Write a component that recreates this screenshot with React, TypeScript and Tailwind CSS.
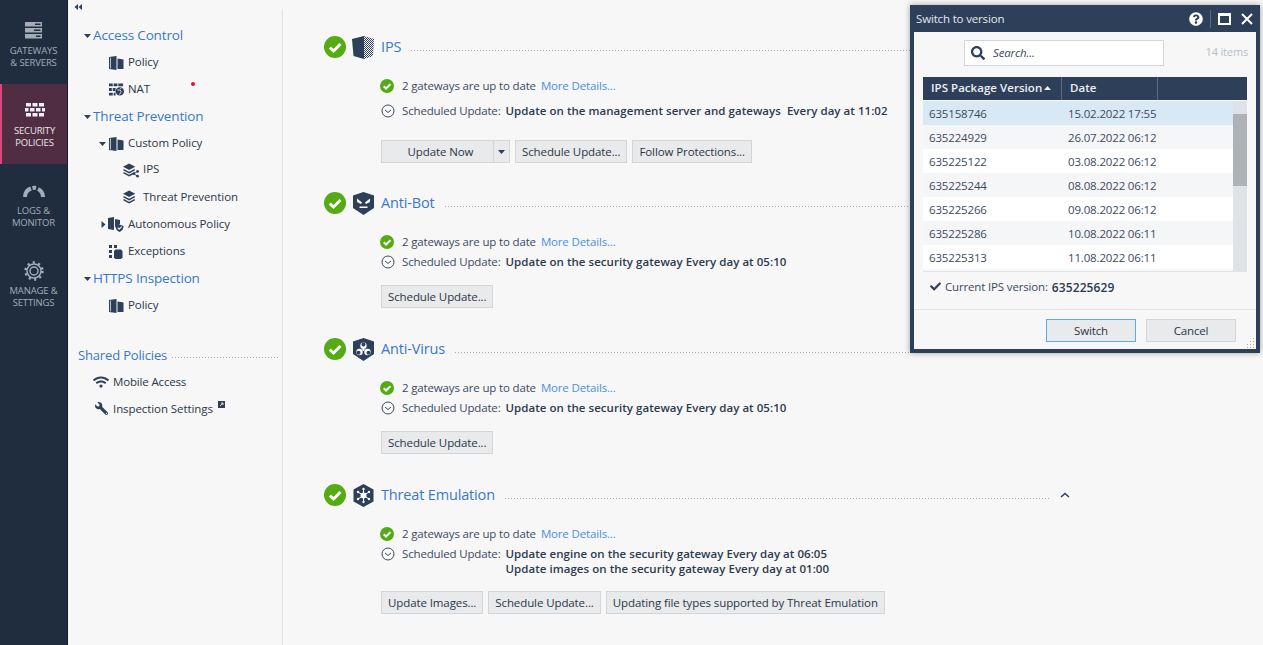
import { FaCheck, FaQuestionCircle, FaSearch, FaWifi, FaWrench } from 'react-icons/fa';

const NAVY = '#2d3f59';

function Caret({ dir = 'down' }: { dir?: 'down' | 'right' | 'up' }): React.ReactNode {
  if (dir === 'right') {
    return (
      <svg width="5" height="7" viewBox="0 0 5 7" className="shrink-0">
        <path d="M0.5 0 L4.5 3.5 L0.5 7 Z" fill="#2d3f59" />
      </svg>
    );
  }
  return (
    <svg width="7" height="4" viewBox="0 0 7 4" className="shrink-0">
      <path d="M0 0 L7 0 L3.5 4 Z" fill="#2d3f59" />
    </svg>
  );
}

function DottedRule({ className }: { className: string }): React.ReactNode {
  return (
    <span
      className={`h-px flex-1 bg-[linear-gradient(to_right,#a9b0ba_1px,transparent_1px)] bg-[length:3px_1px] ${className}`}
    />
  );
}

function BookIcon(): React.ReactNode {
  return (
    <svg width="15" height="14" viewBox="0 0 15 14" className="shrink-0">
      <path d="M0 1 L7.500 0 V14 L0 13 Z M8.500 2.500 L14.500 3.500 V13 H8.500 Z" fill="#2d3f59" />
      <path d="M1.500 1.500 V12.500" stroke="#f7f7f7" strokeWidth="0.7" />
    </svg>
  );
}

function NatIcon(): React.ReactNode {
  return (
    <svg width="15" height="13" viewBox="0 0 16 13" className="shrink-0">
      <path d="M0 0h4v3H0zM5 0h4v3H5zM10 0h5v3h-5zM0 5h3v3H0zM4 5h3v3H4zM0 10h4v3H0zM5 10h2v3H5z" fill="#2d3f59" />
      <circle cx="11.500" cy="8.500" r="4.500" fill="#2d3f59" />
      <path d="M9 7h3l1 2-2 3M12 5l1 1" stroke="#f7f7f7" strokeWidth="0.9" fill="none" />
    </svg>
  );
}

function LayersIcon({ share }: { share?: boolean }): React.ReactNode {
  return (
    <svg width="16" height="15" viewBox="0 0 17 15" className="shrink-0">
      <path d="M6.500 0 L13 3.500 L6.500 7 L0 3.500 Z" fill="#2d3f59" />
      <path d="M0.500 6.500 L6.500 9.800 L12.500 6.500" stroke="#2d3f59" strokeWidth="1.600" fill="none" />
      <path d="M0.500 9.700 L6.500 13 L12.500 9.700" stroke="#2d3f59" strokeWidth="1.600" fill="none" />
      {share && (
        <g fill="#2d3f59">
          <circle cx="11.500" cy="11" r="1.400" />
          <circle cx="15.500" cy="8.500" r="1.400" />
          <circle cx="15.500" cy="13.500" r="1.400" />
          <path d="M11.500 11 L15.500 8.500 M11.500 11 L15.500 13.500" stroke="#2d3f59" strokeWidth="1" />
        </g>
      )}
    </svg>
  );
}

function AutoIcon(): React.ReactNode {
  return (
    <svg width="16" height="15" viewBox="0 0 16 15" className="shrink-0">
      <path d="M0 1 L6 0 V13 L0 12 Z M7 2 L12 3 V7 L7 10 Z" fill="#2d3f59" />
      <path d="M11.500 7.500 L15.500 9 C15.500 12 14 14 11.500 15 C9 14 7.500 12 7.500 9 Z" fill="#2d3f59" />
      <path d="M9.700 10.700 L11.200 12.200 L13.600 9.600" stroke="#f7f7f7" strokeWidth="1.100" fill="none" />
    </svg>
  );
}

function ExceptionsIcon(): React.ReactNode {
  return (
    <svg width="15" height="14" viewBox="0 0 15 14" className="shrink-0">
      <path d="M0 0h3v3H0zM0 5h3v3H0zM0 10h3v3H0zM5 0h3v3H5z" fill="#2d3f59" />
      <path d="M6.500 4.500h5.500l1.500 1.500v6.500l-1.500 1.500H6.500L5 12.500V6Z" fill="#2d3f59" />
    </svg>
  );
}

function StatusCheck({ size }: { size: number }): React.ReactNode {
  return (
    <svg width={size} height={size} viewBox="0 0 22 22" className="shrink-0">
      <circle cx="11" cy="11" r="11" fill="#55ab14" />
      <path d="M5.800 11.500 L9.500 15 L16.500 8" stroke="#fff" strokeWidth="3" fill="none" />
    </svg>
  );
}

function ClockCircle(): React.ReactNode {
  return (
    <svg width="14" height="14" viewBox="0 0 14 14" className="shrink-0">
      <circle cx="7" cy="7" r="6" stroke="#3b4a5f" strokeWidth="1" fill="none" />
      <path d="M4 6 L7 8.500 L10 6" stroke="#3b4a5f" strokeWidth="1" fill="none" />
    </svg>
  );
}

function IpsShield(): React.ReactNode {
  return (
    <svg width="23" height="23" viewBox="0 0 23 23" className="shrink-0">
      <defs>
        <pattern id="dots" width="2" height="2" patternUnits="userSpaceOnUse">
          <rect width="1" height="1" fill="#2d3f59" />
          <rect x="1" y="1" width="1" height="1" fill="#2d3f59" />
        </pattern>
      </defs>
      <path d="M0 3 L12 0 V23 L1.500 20 Z" fill="#2d3f59" />
      <path d="M12 0 L22 3 L21 20 L12 23 Z" fill="url(#dots)" />
    </svg>
  );
}

function BadgeShape({ children }: { children: React.ReactNode }): React.ReactNode {
  return (
    <svg width="23" height="23" viewBox="0 0 23 23" className="shrink-0">
      <path d="M11.500 0 L22 3.500 V16 L11.500 23 L1 16 V3.500 Z" fill="#2d3f59" />
      {children}
    </svg>
  );
}

function BotIcon(): React.ReactNode {
  return (
    <BadgeShape>
      <path d="M5 6.500 L10 10.500 L9 12 L5 10 Z M18 6.500 L13 10.500 L14 12 L18 10 Z" fill="#fff" />
      <rect x="7.500" y="14.500" width="8" height="1.500" fill="#fff" />
    </BadgeShape>
  );
}

function VirusIcon(): React.ReactNode {
  return (
    <BadgeShape>
      <g fill="#fff">
        <circle cx="11.500" cy="7.800" r="3.200" />
        <circle cx="7.500" cy="14" r="3.200" />
        <circle cx="15.500" cy="14" r="3.200" />
      </g>
      <g fill="#2d3f59">
        <circle cx="11.500" cy="6.600" r="2" />
        <circle cx="6.500" cy="14.700" r="2" />
        <circle cx="16.500" cy="14.700" r="2" />
      </g>
      <circle cx="11.500" cy="11.800" r="1.200" fill="#fff" />
    </BadgeShape>
  );
}

function EmulationIcon(): React.ReactNode {
  return (
    <svg width="23" height="23" viewBox="0 0 23 23" className="shrink-0">
      <path d="M11.500 0 L21.500 5.500 V17.500 L11.500 23 L1.500 17.500 V5.500 Z" fill="#2d3f59" />
      <circle cx="11.500" cy="11.500" r="3" fill="#fff" />
      <g stroke="#fff" strokeWidth="1">
        <path d="M11.500 11.500 L11.500 5 M11.500 11.500 L17 8 M11.500 11.500 L17 15 M11.500 11.500 L11.500 18 M11.500 11.500 L6 15 M11.500 11.500 L6 8" />
      </g>
      <g fill="#fff">
        <circle cx="11.500" cy="5" r="1.200" />
        <circle cx="17" cy="8" r="1.200" />
        <circle cx="17" cy="15" r="1.200" />
        <circle cx="11.500" cy="18" r="1.200" />
        <circle cx="6" cy="15" r="1.200" />
        <circle cx="6" cy="8" r="1.200" />
      </g>
    </svg>
  );
}

function ServerIcon(): React.ReactNode {
  return (
    <svg width="17" height="17" viewBox="0 0 17 17">
      <g fill="#a3acb7">
        <path d="M0 0h17v4.500H0zM0 6h17v4.500H0zM0 12h17v4.500H0z" />
      </g>
      <g fill="#1f2d3f">
        <path d="M10 1.500h5.500v1.500H10zM9 7.500h6.500V9H9zM11 13.500h4.500V15H11z" />
      </g>
    </svg>
  );
}

function WallIcon(): React.ReactNode {
  return (
    <svg width="20" height="14" viewBox="0 0 20 14">
      <g fill="#eef0f3">
        <path d="M1 0h5v3.500H1zM7.500 0h5v3.500h-5zM14 0h5v3.500h-5z" />
        <path d="M0 5h3.500v3.500H0zM5 5h4.500v3.500H5zM11 5h4.500v3.500H11zM17 5h3v3.500h-3z" />
        <path d="M1 10h5v3.500H1zM7.500 10h5v3.500h-5zM14 10h5v3.500h-5z" />
      </g>
    </svg>
  );
}

function GaugeIcon(): React.ReactNode {
  return (
    <svg width="22" height="13" viewBox="0 0 22 13">
      <path d="M2 12 A 9 9 0 0 1 8 3.500" stroke="#a3acb7" strokeWidth="4" fill="none" />
      <path d="M9.500 3 A 9 9 0 0 1 13 3" stroke="#a3acb7" strokeWidth="4" fill="none" />
      <path d="M15 4 A 9 9 0 0 1 20 12" stroke="#a3acb7" strokeWidth="4" fill="none" />
    </svg>
  );
}

function GearIcon(): React.ReactNode {
  return (
    <svg width="20" height="20" viewBox="0 0 20 20">
      <circle cx="10" cy="10" r="7" stroke="#a3acb7" strokeWidth="1.500" fill="none" />
      <circle cx="10" cy="10" r="4" stroke="#a3acb7" strokeWidth="1.500" fill="none" />
      <g stroke="#a3acb7" strokeWidth="2.500" strokeDasharray="2.200 3.300">
        <circle cx="10" cy="10" r="8.500" fill="none" />
      </g>
    </svg>
  );
}

function RailItem({
  icon,
  lines,
  active,
  className,
  iconTop,
  labelTop,
}: {
  icon: React.ReactNode;
  lines: string[];
  active?: boolean;
  className: string;
  iconTop: string;
  labelTop: string;
}): React.ReactNode {
  return (
    <div
      className={`flex flex-col items-center justify-start ${className} ${
        active ? 'border-l-2 border-[#d8487c] bg-[#512d42] text-[#e6e9ed]' : 'text-[#a3acb7]'
      }`}
    >
      <div className={`flex h-[20px] items-center justify-center ${iconTop}`}>{icon}</div>
      <div className={`text-center text-[9.5px] leading-[12px] ${labelTop}`}>
        {lines.map((line) => (
          <div key={line}>{line}</div>
        ))}
      </div>
    </div>
  );
}

function TreeHeader({ label }: { label: string }): React.ReactNode {
  return (
    <div className="flex h-[27px] items-center pl-[16px]">
      <span className="flex w-[9px]">
        <Caret />
      </span>
      <span className="text-[13.5px] text-[#3a78c9]">{label}</span>
    </div>
  );
}

function TreeItem({
  icon,
  label,
  indent,
  caret,
  labelClass,
  children,
}: {
  icon: React.ReactNode;
  label: string;
  indent: string;
  caret?: React.ReactNode;
  labelClass?: string;
  children?: React.ReactNode;
}): React.ReactNode {
  return (
    <div className={`relative flex h-[27px] items-center ${indent}`}>
      {caret}
      {icon}
      <span className={`ml-[4px] text-[11.5px] tracking-[-0.08px] text-[#2b3646] ${labelClass ?? 'mb-[2px]'}`}>{label}</span>
      {children}
    </div>
  );
}

function Button({ label, width }: { label: string; width?: string }): React.ReactNode {
  return (
    <div
      className={`flex h-[23px] items-center justify-center border border-[#d3d6d9] bg-[#e9eaec] px-[6px] text-[11.5px] tracking-[-0.1px] text-[#2b3646] ${width ?? ''}`}
    >
      {label}
    </div>
  );
}

function Section({
  status,
  icon,
  title,
  top,
  gapTop,
  gapSchedule,
  gapButtons,
  schedule,
  chevron,
  children,
}: {
  status: React.ReactNode;
  icon: React.ReactNode;
  title: string;
  top: string;
  gapTop: string;
  gapSchedule: string;
  gapButtons: string;
  schedule: string[];
  chevron?: boolean;
  children: React.ReactNode;
}): React.ReactNode {
  return (
    <section className={top}>
      <div className="flex h-[24px] items-center">
        {status}
        <span className="ml-[6px] flex w-[24px]">{icon}</span>
        <span className="ml-[5px] text-[14.5px] text-[#3a78c9]">{title}</span>
        <DottedRule className="ml-[10px] mt-[6px]" />
        {chevron ? (
          <svg width="10" height="6" viewBox="0 0 10 6" className="ml-[10px]">
            <path d="M1 5 L5 1.500 L9 5" stroke="#2d3f59" strokeWidth="1.500" fill="none" />
          </svg>
        ) : (
          <span className="ml-[10px] w-[10px]" />
        )}
      </div>
      <div className={`pl-[57px] ${gapTop}`}>
        <div className="flex h-[16px] items-center text-[11.5px] text-[#3b4a5f]">
          <span className="flex w-[21px] -ml-px">
            <StatusCheck size={14} />
          </span>
          <span className="ml-px">2 gateways are up to date</span>
          <span className="ml-[5px] text-[#4a90e2]">More Details...</span>
        </div>
        <div className={`flex items-start text-[11.5px] text-[#3b4a5f] ${gapSchedule}`}>
          <span className="flex h-[16px] w-[21px] items-center">
            <ClockCircle />
          </span>
          <span className="h-[16px] leading-[16px]">Scheduled Update:</span>
          <div className="ml-[5px] font-semibold leading-[15px] tracking-[0.04px] whitespace-pre text-[#2d3a4d]">
            {schedule.map((line) => (
              <div key={line}>{line}</div>
            ))}
          </div>
        </div>
        <div className={`flex gap-[5px] ${gapButtons}`}>{children}</div>
      </div>
    </section>
  );
}

const ROWS = [
  ['635158746', '15.02.2022 17:55', 'bg-[#d9e8f5]'],
  ['635224929', '26.07.2022 06:12', 'bg-[#f5f6f8]'],
  ['635225122', '03.08.2022 06:12', 'bg-white'],
  ['635225244', '08.08.2022 06:12', 'bg-[#f5f6f8]'],
  ['635225266', '09.08.2022 06:12', 'bg-white'],
  ['635225286', '10.08.2022 06:11', 'bg-[#f5f6f8]'],
  ['635225313', '11.08.2022 06:11', 'bg-white'],
];

function VersionDialog(): React.ReactNode {
  return (
    <div className="absolute left-[910px] top-[5px] flex h-[348px] w-[350px] flex-col border-x-4 border-b-4 border-[#2d3f59] bg-[#f7f7f7] shadow-[0_0_6px_rgba(0,0,0,0.35)]">
      <div className="-mx-[4px] flex h-[27px] shrink-0 items-center bg-[#2d3f59] pl-[6px] text-[11.5px] text-[#e6e9ed]">
        <span>Switch to version</span>
        <FaQuestionCircle className="ml-auto text-[14px] text-white" />
        <span className="mx-[7px] h-[18px] w-px bg-[#5a6a80]" />
        <span className="h-[12px] w-[13px] border-2 border-t-[3px] border-white" />
        <svg width="12" height="12" viewBox="0 0 12 12" className="ml-[10px] mr-[7px]">
          <path d="M1 1 L11 11 M11 1 L1 11" stroke="#fff" strokeWidth="2" />
        </svg>
      </div>
      <div className="flex h-[42px] shrink-0 items-center">
        <div className="ml-[50px] flex h-[26px] w-[200px] items-center border border-[#d3d6d9] bg-white pl-[6px]">
          <FaSearch className="text-[14px] text-[#2d3f59]" />
          <span className="ml-[8px] text-[11.5px] italic text-[#3b4a5f]">Search...</span>
        </div>
        <span className="mb-[2px] ml-auto mr-[8px] text-[11px] text-[#b8bec6]">14 items</span>
      </div>
      <div className="mx-[9px] mt-[3px] flex h-[195px] shrink-0 flex-col">
        <div className="flex h-[23px] shrink-0 items-center bg-[#2d3f59] text-[11.5px] font-semibold tracking-[0.04px] text-[#eef0f3]">
          <div className="flex h-full w-[139px] items-center border-r border-[#5a6a80] pb-[2px] pl-[8px]">
            IPS Package Version
            <svg width="7" height="4" viewBox="0 0 7 4" className="ml-[2px]">
              <path d="M0 4 L7 4 L3.500 0 Z" fill="#eef0f3" />
            </svg>
          </div>
          <div className="flex h-full w-[96px] items-center border-r border-[#5a6a80] pb-[2px] pl-[8px]">Date</div>
        </div>
        <div className="flex min-h-0 flex-1 border-b border-[#dfe2e6] pt-px">
          <div className="flex-1 overflow-hidden">
            {ROWS.map(([version, date, bg]) => (
              <div key={version} className={`flex h-[24px] items-center pt-[2px] text-[11.5px] text-[#3b4a5f] ${bg}`}>
                <span className="w-[139px] pl-[6px]">{version}</span>
                <span className="pl-[6px]">{date}</span>
              </div>
            ))}
          </div>
          <div className="w-[14px] shrink-0 bg-[#dfe2e6] pt-[13px]">
            <div className="h-[72px] bg-[#adb2b6]" />
          </div>
        </div>
      </div>
      <div className="flex h-[38px] shrink-0 items-center border-b border-[#e1e3e5] pb-[8px] pl-[16px] text-[11.5px] text-[#3b4a5f]">
        <FaCheck className="text-[11px] text-[#2d3f59]" />
        <span className="ml-[4px]">Current IPS version:</span>
        <span className="ml-[4px] mt-[2px] text-[12px] font-semibold tracking-[0.1px] text-[#2d3a4d]">635225629</span>
      </div>
      <div className="relative flex flex-1 items-start justify-end gap-[10px] pr-[20px] pt-[9px]">
        <div className="flex h-[23px] w-[90px] items-center justify-center border border-[#5aaee8] bg-[#e9eaec] text-[11.5px] text-[#2b3646]">
          Switch
        </div>
        <div className="flex h-[23px] w-[90px] items-center justify-center border border-[#d3d6d9] bg-[#e9eaec] text-[11.5px] text-[#2b3646]">
          Cancel
        </div>
        <svg width="11" height="11" viewBox="0 0 11 11" className="absolute bottom-0 right-0">
          <g fill="#a9b0ba">
            <path d="M8 0h1v1H8zM8 3h1v1H8zM5 3h1v1H5zM8 6h1v1H8zM5 6h1v1H5zM2 6h1v1H2zM8 9h1v1H8zM5 9h1v1H5zM2 9h1v1H2z" />
          </g>
        </svg>
      </div>
    </div>
  );
}

export default function App(): React.ReactNode {
  return (
    <div
      className="relative flex h-[645px] w-[1263px] overflow-hidden bg-[#f7f7f7] tracking-[-0.16px]"
      style={{ fontFamily: '"Open Sans", "Noto Sans", sans-serif', color: NAVY }}
    >
      <nav className="w-[68px] shrink-0 border-r border-[#141d29] bg-[#1f2d3f]">
        <RailItem icon={<ServerIcon />} lines={['GATEWAYS', '& SERVERS']} className="h-[84px]" iconTop="mt-[20px]" labelTop="mt-[5px]" />
        <RailItem icon={<WallIcon />} lines={['SECURITY', 'POLICIES']} className="h-[80px]" iconTop="mt-[16px]" labelTop="mt-[5px]" active />
        <RailItem icon={<GaugeIcon />} lines={['LOGS &', 'MONITOR']} className="h-[80px]" iconTop="mt-[17px]" labelTop="mt-[4px]" />
        <RailItem icon={<GearIcon />} lines={['MANAGE &', 'SETTINGS']} className="h-[80px]" iconTop="mt-[17px]" labelTop="mt-[4px]" />
      </nav>

      <aside className="mt-[9px] w-[215px] shrink-0 self-stretch border-r border-[#e3e4e6] pt-[13px]">
        <svg width="8" height="6" viewBox="0 0 8 6" className="absolute left-[74px] top-[4px]">
          <path d="M4 0 V6 L0.500 3 Z M8 0 V6 L4.500 3 Z" fill="#2d3f59" />
        </svg>
        <TreeHeader label="Access Control" />
        <TreeItem icon={<BookIcon />} label="Policy" indent="pl-[41px]" />
        <TreeItem icon={<NatIcon />} label="NAT" indent="pl-[41px]">
          <span className="absolute left-[123px] top-[6px] h-[4px] w-[4px] rounded-full bg-[#e81123]" />
        </TreeItem>
        <TreeHeader label="Threat Prevention" />
        <TreeItem
          icon={<BookIcon />}
          label="Custom Policy"
          indent="pl-[31px]"
          caret={
            <span className="flex w-[10px]">
              <Caret />
            </span>
          }
        />
        <TreeItem icon={<LayersIcon share />} label="IPS" indent="pl-[55px]" labelClass="mb-[4px]" />
        <TreeItem icon={<LayersIcon />} label="Threat Prevention" indent="pl-[55px]" />
        <TreeItem
          icon={<AutoIcon />}
          label="Autonomous Policy"
          indent="pl-[33px]"
          caret={
            <span className="flex w-[7px]">
              <Caret dir="right" />
            </span>
          }
        />
        <TreeItem icon={<ExceptionsIcon />} label="Exceptions" indent="pl-[41px]" />
        <TreeHeader label="HTTPS Inspection" />
        <TreeItem icon={<BookIcon />} label="Policy" indent="pl-[41px]" />

        <div className="mt-[24px] flex h-[25px] items-center pl-[10px] pr-[4px]">
          <span className="text-[13px] text-[#3a78c9]">Shared Policies</span>
          <DottedRule className="ml-[5px] mt-[4px]" />
        </div>
        <div className="flex h-[27px] items-center pl-[25px] text-[11.5px] text-[#2b3646]">
          <FaWifi className="text-[16px] text-[#2d3f59]" />
          <span className="ml-[4px]">Mobile Access</span>
        </div>
        <div className="relative flex h-[27px] items-center pl-[27px] text-[11.5px] tracking-[-0.08px] text-[#2b3646]">
          <FaWrench className="scale-x-[-1] text-[13px] text-[#2d3f59]" />
          <span className="ml-[5px]">Inspection Settings</span>
          <svg width="7" height="7" viewBox="0 0 7 7" className="ml-[5px] mb-[9px]">
            <rect width="7" height="7" fill="#2d3f59" />
            <path d="M2 5 L5 2 M3 2 H5 V4" stroke="#fff" strokeWidth="0.8" fill="none" />
          </svg>
        </div>
      </aside>

      <main className="min-w-0 flex-1 pl-[41px] pr-[193px]">
        <Section
          status={<StatusCheck size={22} />}
          icon={<IpsShield />}
          title="IPS"
          top="pt-[35px]"
          gapTop="mt-[19px]"
          gapSchedule="mt-[9px]"
          gapButtons="mt-[21px]"
          schedule={['Update on the management server and gateways  Every day at 11:02']}
        >
          <div className="flex">
            <Button label="Update Now" width="w-[113px] pl-[12px]" />
            <div className="flex h-[23px] w-[16px] items-center justify-center border border-l-0 border-[#d3d6d9] bg-[#e9eaec]">
              <Caret />
            </div>
          </div>
          <Button label="Schedule Update..." />
          <Button label="Follow Protections..." />
        </Section>
        <Section
          status={<StatusCheck size={22} />}
          icon={<BotIcon />}
          title="Anti-Bot"
          top="mt-[28px]"
          gapTop="mt-[19px]"
          gapSchedule="mt-[4px]"
          gapButtons="mt-[15px]"
          schedule={['Update on the security gateway Every day at 05:10']}
        >
          <Button label="Schedule Update..." />
        </Section>
        <Section
          status={<StatusCheck size={22} />}
          icon={<VirusIcon />}
          title="Anti-Virus"
          top="mt-[29px]"
          gapTop="mt-[19px]"
          gapSchedule="mt-[4px]"
          gapButtons="mt-[15px]"
          schedule={['Update on the security gateway Every day at 05:10']}
        >
          <Button label="Schedule Update..." />
        </Section>
        <Section
          status={<StatusCheck size={22} />}
          icon={<EmulationIcon />}
          title="Threat Emulation"
          top="mt-[29px]"
          gapTop="mt-[19px]"
          gapSchedule="mt-[4px]"
          gapButtons="mt-[15px]"
          schedule={['Update engine on the security gateway Every day at 06:05', 'Update images on the security gateway Every day at 01:00']}
          chevron
        >
          <Button label="Update Images..." />
          <Button label="Schedule Update..." />
          <Button label="Updating file types supported by Threat Emulation" />
        </Section>
      </main>

      <VersionDialog />
    </div>
  );
}
